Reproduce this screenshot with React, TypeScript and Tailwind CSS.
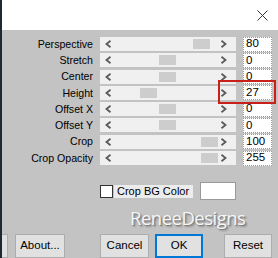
import React from "react";

const rows: { label: string; thumb: number; value: string }[] = [
  { label: "Perspective", thumb: 93, value: "80" },
  { label: "Stretch", thumb: 59, value: "0" },
  { label: "Center", thumb: 59, value: "0" },
  { label: "Height", thumb: 40, value: "27" },
  { label: "Offset X", thumb: 59, value: "0" },
  { label: "Offset Y", thumb: 59, value: "0" },
  { label: "Crop", thumb: 101, value: "100" },
  { label: "Crop Opacity", thumb: 101, value: "255" },
];

function Chevron({ dir }: { dir: "l" | "r" }) {
  return (
    <svg width="7" height="8" viewBox="0 0 7 8" className="shrink-0">
      {dir === "l" ? (
        <path d="M5.5 0.8 L1.5 4 L5.5 7.2" fill="none" stroke="#5a5a5a" strokeWidth="1.8" />
      ) : (
        <path d="M1.5 0.8 L5.5 4 L1.5 7.2" fill="none" stroke="#5a5a5a" strokeWidth="1.8" />
      )}
    </svg>
  );
}

export default function App() {
  return (
    <div
      className="relative w-[278px] h-[258px] overflow-hidden bg-[#c3c3c3] border-l-[2px] border-[#1b2b30] flex flex-col"
      style={{ fontFamily: '"Liberation Sans", Arial, sans-serif' }}
    >
      <div className="h-[30px] bg-white flex items-center justify-end pr-[10px] shrink-0">
        <svg width="11" height="11" viewBox="0 0 11 11">
          <path d="M0.5 0.5 L10.5 10.5 M10.5 0.5 L0.5 10.5" stroke="#333" strokeWidth="1" />
        </svg>
      </div>

      <div className="flex flex-col gap-[2.3px] pt-[7px]">
        {rows.map((r) => (
          <div key={r.label} className="flex items-center h-[14px]">
            <div className="w-[91px] text-right text-[10.6px] leading-none text-black">{r.label}</div>
            <div className="ml-[7px] w-[136px] h-[14px] bg-[#f0f0f0] relative flex items-center justify-between px-[5px]">
              <Chevron dir="l" />
              <div
                className="absolute top-[2px] h-[10px] w-[17px] bg-[#cdcdcd]"
                style={{ left: r.thumb }}
              />
              <div className="mr-[4px]"><Chevron dir="r" /></div>
            </div>
            <div className="ml-[7px] w-[29px] h-[15px] bg-white border border-[#9a9a9a] border-dotted flex items-center pl-[2px] text-[11.5px] leading-none text-black">
              {r.value}
            </div>
          </div>
        ))}
      </div>

      <div className="flex items-center mt-[17px] h-[18px]">
        <div className="ml-[98px] w-[13px] h-[13px] bg-white border border-[#333]" />
        <div className="ml-[1px] h-[13px] w-[79px] bg-[#ececec] flex items-center pl-[3px] text-[11px] leading-none text-black">
          Crop BG Color
        </div>
        <div className="ml-[7px] w-[36px] h-[18px] bg-white border border-[#9a9a9a]" />
      </div>

      <div className="flex justify-start mt-[5px] h-[30px] items-center">
        <div
          className="ml-[128px] text-[18.5px] leading-none text-[#f6f6f6] tracking-[-0.5px]"
          style={{ fontFamily: '"Open Sans", "Liberation Sans", sans-serif', textShadow: "1px 1px 0 #808080, 2px 2px 2px #8a8a8a" }}
        >
          ReneeDesigns
        </div>
      </div>

      <div className="flex items-start mt-[3px] h-[24px] text-[11.5px] text-black">
        <div className="ml-[-42px] w-[48px] h-[24px] bg-[#e1e1e1] border border-[#adadad]" />
        <div className="ml-[7px] w-[50px] h-[24px] bg-[#e1e1e1] border border-[#adadad] flex items-center justify-center">About...</div>
        <div className="ml-[35px] w-[49px] h-[24px] bg-[#e1e1e1] border border-[#adadad] flex items-center justify-center">Cancel</div>
        <div className="ml-[6px] w-[48px] h-[24px] bg-[#e1e1e1] border-[2px] border-[#0078d7] flex items-center justify-center">OK</div>
        <div className="ml-[21px] w-[48px] h-[24px] bg-[#e1e1e1] border border-[#adadad] flex items-center justify-center">Reset</div>
      </div>

      <div className="absolute left-[216px] top-[80px] w-[58px] h-[24px] border-[2px] border-[#c8201a]" />
    </div>
  );
}
